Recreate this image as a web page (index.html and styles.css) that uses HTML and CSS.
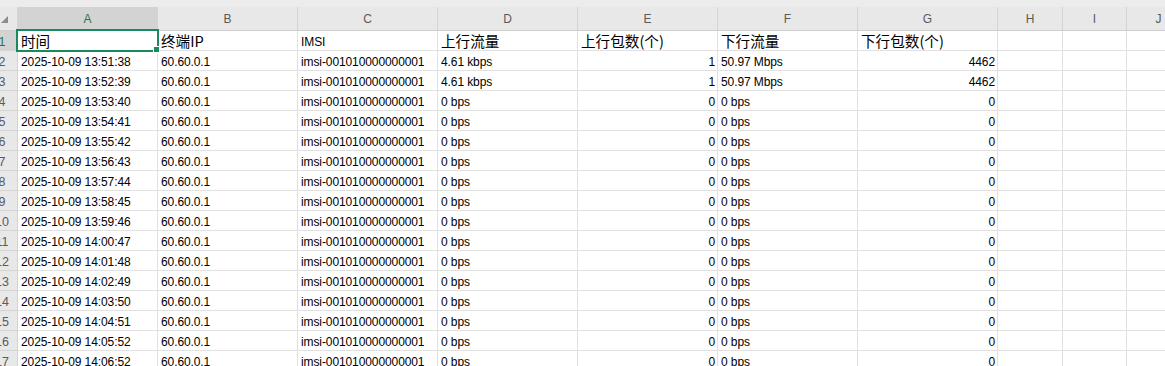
FILE: index.html
```html
<!DOCTYPE html>
<html lang="zh-CN">
<head>
<meta charset="utf-8">
<title>Sheet</title>
<link rel="stylesheet" href="styles.css">
</head>
<body>
<div class="sheet">
  <div class="strip"></div>
  <div class="row head">
    <div class="corner"><svg width="7" height="7" viewBox="0 0 7 7"><polygon points="7,0 7,7 0,7" fill="#8c8c8c"/></svg></div>
    <div class="ch active">A</div><div class="ch">B</div><div class="ch">C</div><div class="ch">D</div><div class="ch">E</div><div class="ch">F</div><div class="ch">G</div><div class="ch">H</div><div class="ch">I</div><div class="ch">J</div>
  </div>
  <div class="row">
    <div class="rh active"><span>1</span></div>
    <div class="c cjk sel">时间<span class="handle"></span></div><div class="c cjk">终端IP</div><div class="c">IMSI</div><div class="c cjk">上行流量</div><div class="c cjk">上行包数(个)</div><div class="c cjk">下行流量</div><div class="c cjk">下行包数(个)</div><div class="c"></div><div class="c"></div><div class="c"></div>
  </div>
  <div class="row"><div class="rh"><span>2</span></div><div class="c">2025-10-09 13:51:38</div><div class="c">60.60.0.1</div><div class="c">imsi-001010000000001</div><div class="c">4.61 kbps</div><div class="c n">1</div><div class="c">50.97 Mbps</div><div class="c n">4462</div><div class="c"></div><div class="c"></div><div class="c"></div></div>
  <div class="row"><div class="rh"><span>3</span></div><div class="c">2025-10-09 13:52:39</div><div class="c">60.60.0.1</div><div class="c">imsi-001010000000001</div><div class="c">4.61 kbps</div><div class="c n">1</div><div class="c">50.97 Mbps</div><div class="c n">4462</div><div class="c"></div><div class="c"></div><div class="c"></div></div>
  <div class="row"><div class="rh"><span>4</span></div><div class="c">2025-10-09 13:53:40</div><div class="c">60.60.0.1</div><div class="c">imsi-001010000000001</div><div class="c">0 bps</div><div class="c n">0</div><div class="c">0 bps</div><div class="c n">0</div><div class="c"></div><div class="c"></div><div class="c"></div></div>
  <div class="row"><div class="rh"><span>5</span></div><div class="c">2025-10-09 13:54:41</div><div class="c">60.60.0.1</div><div class="c">imsi-001010000000001</div><div class="c">0 bps</div><div class="c n">0</div><div class="c">0 bps</div><div class="c n">0</div><div class="c"></div><div class="c"></div><div class="c"></div></div>
  <div class="row"><div class="rh"><span>6</span></div><div class="c">2025-10-09 13:55:42</div><div class="c">60.60.0.1</div><div class="c">imsi-001010000000001</div><div class="c">0 bps</div><div class="c n">0</div><div class="c">0 bps</div><div class="c n">0</div><div class="c"></div><div class="c"></div><div class="c"></div></div>
  <div class="row"><div class="rh"><span>7</span></div><div class="c">2025-10-09 13:56:43</div><div class="c">60.60.0.1</div><div class="c">imsi-001010000000001</div><div class="c">0 bps</div><div class="c n">0</div><div class="c">0 bps</div><div class="c n">0</div><div class="c"></div><div class="c"></div><div class="c"></div></div>
  <div class="row"><div class="rh"><span>8</span></div><div class="c">2025-10-09 13:57:44</div><div class="c">60.60.0.1</div><div class="c">imsi-001010000000001</div><div class="c">0 bps</div><div class="c n">0</div><div class="c">0 bps</div><div class="c n">0</div><div class="c"></div><div class="c"></div><div class="c"></div></div>
  <div class="row"><div class="rh"><span>9</span></div><div class="c">2025-10-09 13:58:45</div><div class="c">60.60.0.1</div><div class="c">imsi-001010000000001</div><div class="c">0 bps</div><div class="c n">0</div><div class="c">0 bps</div><div class="c n">0</div><div class="c"></div><div class="c"></div><div class="c"></div></div>
  <div class="row"><div class="rh"><span>10</span></div><div class="c">2025-10-09 13:59:46</div><div class="c">60.60.0.1</div><div class="c">imsi-001010000000001</div><div class="c">0 bps</div><div class="c n">0</div><div class="c">0 bps</div><div class="c n">0</div><div class="c"></div><div class="c"></div><div class="c"></div></div>
  <div class="row"><div class="rh"><span>11</span></div><div class="c">2025-10-09 14:00:47</div><div class="c">60.60.0.1</div><div class="c">imsi-001010000000001</div><div class="c">0 bps</div><div class="c n">0</div><div class="c">0 bps</div><div class="c n">0</div><div class="c"></div><div class="c"></div><div class="c"></div></div>
  <div class="row"><div class="rh"><span>12</span></div><div class="c">2025-10-09 14:01:48</div><div class="c">60.60.0.1</div><div class="c">imsi-001010000000001</div><div class="c">0 bps</div><div class="c n">0</div><div class="c">0 bps</div><div class="c n">0</div><div class="c"></div><div class="c"></div><div class="c"></div></div>
  <div class="row"><div class="rh"><span>13</span></div><div class="c">2025-10-09 14:02:49</div><div class="c">60.60.0.1</div><div class="c">imsi-001010000000001</div><div class="c">0 bps</div><div class="c n">0</div><div class="c">0 bps</div><div class="c n">0</div><div class="c"></div><div class="c"></div><div class="c"></div></div>
  <div class="row"><div class="rh"><span>14</span></div><div class="c">2025-10-09 14:03:50</div><div class="c">60.60.0.1</div><div class="c">imsi-001010000000001</div><div class="c">0 bps</div><div class="c n">0</div><div class="c">0 bps</div><div class="c n">0</div><div class="c"></div><div class="c"></div><div class="c"></div></div>
  <div class="row"><div class="rh"><span>15</span></div><div class="c">2025-10-09 14:04:51</div><div class="c">60.60.0.1</div><div class="c">imsi-001010000000001</div><div class="c">0 bps</div><div class="c n">0</div><div class="c">0 bps</div><div class="c n">0</div><div class="c"></div><div class="c"></div><div class="c"></div></div>
  <div class="row"><div class="rh"><span>16</span></div><div class="c">2025-10-09 14:05:52</div><div class="c">60.60.0.1</div><div class="c">imsi-001010000000001</div><div class="c">0 bps</div><div class="c n">0</div><div class="c">0 bps</div><div class="c n">0</div><div class="c"></div><div class="c"></div><div class="c"></div></div>
  <div class="row"><div class="rh"><span>17</span></div><div class="c">2025-10-09 14:06:52</div><div class="c">60.60.0.1</div><div class="c">imsi-001010000000001</div><div class="c">0 bps</div><div class="c n">0</div><div class="c">0 bps</div><div class="c n">0</div><div class="c"></div><div class="c"></div><div class="c"></div></div>
</div>
</body>
</html>
```

FILE: styles.css
```css
html, body {
  margin: 0;
  padding: 0;
  background: #ffffff;
}
.sheet {
  width: 1165px;
  height: 366px;
  overflow: hidden;
  font-family: "Liberation Sans", Arial, sans-serif;
  font-size: 12px;
  color: #000;
}
.strip {
  height: 7px;
  width: 1191px;
  background: #ececec;
}
.row {
  display: grid;
  grid-template-columns: 18px repeat(7, 140px) 65px 64px 64px;
  width: 1191px;
  height: 20px;
}
.row.head {
  height: 24px;
  background: #e8e8e8;
}
.corner {
  box-sizing: border-box;
  border-right: 1px solid #d4d4d4;
  border-bottom: 1px solid #cfcfcf;
  display: flex;
  align-items: flex-end;
  justify-content: flex-start;
  padding: 0 0 7px 1px;
}
.corner svg { display: block; }
.ch {
  box-sizing: border-box;
  border-right: 1px solid #d4d4d4;
  border-bottom: 1px solid #cfcfcf;
  display: flex;
  align-items: center;
  justify-content: center;
  padding-top: 1px;
  color: #5a5a5a;
  font-size: 12px;
}
.ch.active {
  background: #d3d3d3;
  color: #1d7a4f;
}
.rh {
  box-sizing: border-box;
  background: #e8e8e8;
  border-right: 1px solid #d4d4d4;
  border-bottom: 1px solid #d4d4d4;
  display: flex;
  justify-content: flex-end;
  align-items: flex-end;
  padding: 0 0 1px 0;
  overflow: hidden;
  white-space: nowrap;
  line-height: 14px;
  color: #5a5a5a;
  font-size: 12.5px;
}
.rh span {
  flex: 0 0 30px;
  text-align: center;
}
.rh.active {
  background: #d3d3d3;
  color: #1d7a4f;
}
.c {
  box-sizing: border-box;
  border-right: 1px solid #e1e1e1;
  border-bottom: 1px solid #e1e1e1;
  display: flex;
  align-items: flex-end;
  padding: 0 2px 1px 3px;
  line-height: 14px;
  white-space: nowrap;
  overflow: hidden;
  letter-spacing: -0.1px;
}
.c.n {
  justify-content: flex-end;
}
.c.cjk {
  font-family: "Noto Sans CJK SC", "Liberation Sans", sans-serif;
  font-size: 14.6px;
  line-height: 16px;
  letter-spacing: 0;
}
.c.sel {
  position: relative;
  overflow: visible;
}
.c.sel::after {
  content: "";
  position: absolute;
  left: -2px;
  top: -2px;
  right: -2px;
  bottom: -2px;
  border: 2px solid #178a5e;
  pointer-events: none;
}
.handle {
  position: absolute;
  right: -3px;
  bottom: -3px;
  width: 5px;
  height: 5px;
  background: #178a5e;
  border: 1px solid #fff;
  z-index: 2;
}
```
